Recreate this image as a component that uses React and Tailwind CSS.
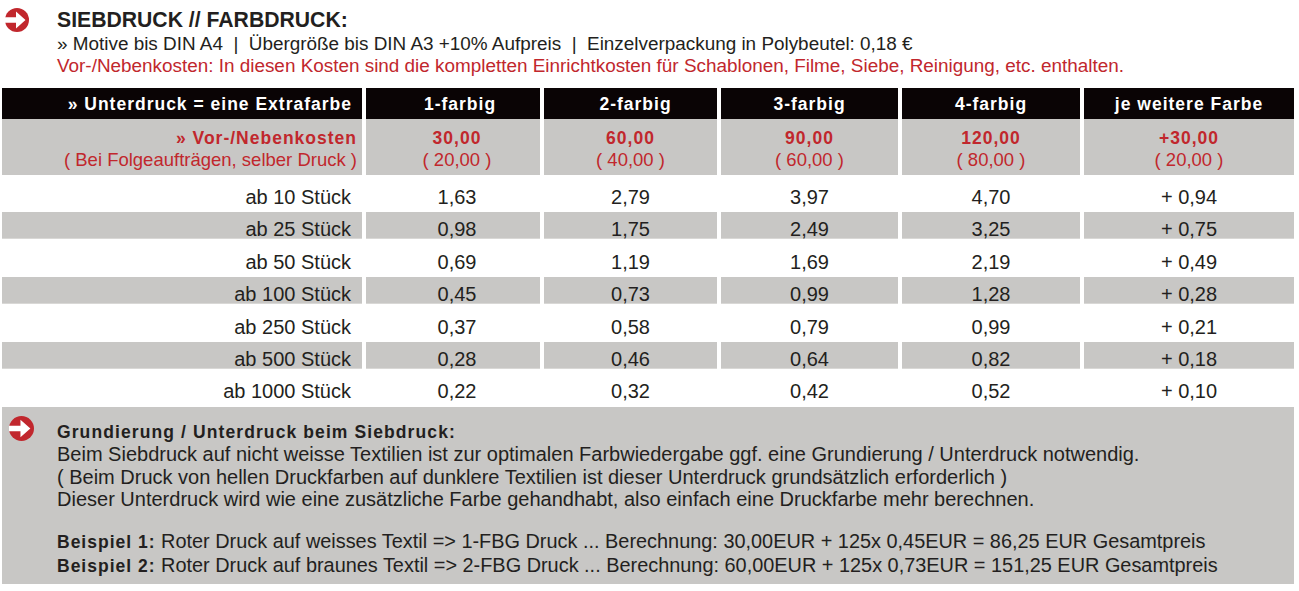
import React from "react";

const Arrow = ({ className }) => (
  <svg viewBox="0 0 24 24" className={className}>
    <circle cx="12" cy="12" r="12" fill="#c1272d" />
    <polygon points="-1,9.3 11,9.3 11,3.6 20.5,12 11,20.4 11,14.7 -1,14.7" fill="#ffffff" />
  </svg>
);

const cols = "grid grid-cols-[360px_174px_173px_177px_178px_210px] gap-x-[4px]";

const heads = ["1-farbig", "2-farbig", "3-farbig", "4-farbig", "je weitere Farbe"];
const setup = [
  ["30,00", "( 20,00 )"],
  ["60,00", "( 40,00 )"],
  ["90,00", "( 60,00 )"],
  ["120,00", "( 80,00 )"],
  ["+30,00", "( 20,00 )"],
];
const rows = [
  ["ab 10 Stück", "1,63", "2,79", "3,97", "4,70", "+ 0,94"],
  ["ab 25 Stück", "0,98", "1,75", "2,49", "3,25", "+ 0,75"],
  ["ab 50 Stück", "0,69", "1,19", "1,69", "2,19", "+ 0,49"],
  ["ab 100 Stück", "0,45", "0,73", "0,99", "1,28", "+ 0,28"],
  ["ab 250 Stück", "0,37", "0,58", "0,79", "0,99", "+ 0,21"],
  ["ab 500 Stück", "0,28", "0,46", "0,64", "0,82", "+ 0,18"],
  ["ab 1000 Stück", "0,22", "0,32", "0,42", "0,52", "+ 0,10"],
];

export default function App() {
  return (
    <div className="w-[1299px] h-[591px] bg-white overflow-hidden text-[#231f20] font-['Liberation_Sans',Arial,sans-serif]">
      {/* Top heading */}
      <div className="flex pt-[8px]">
        <div className="w-[57px] pl-[5px]">
          <Arrow className="w-[24px] h-[24px]" />
        </div>
        <div>
          <div className="text-[21.2px] leading-[24px] font-bold">SIEBDRUCK // FARBDRUCK:</div>
          <div className="text-[18.9px] leading-[23px] whitespace-pre">
            {"» Motive bis DIN A4  |  Übergröße bis DIN A3 +10% Aufpreis  |  Einzelverpackung in Polybeutel: 0,18 €"}
          </div>
          <div className="text-[18.9px] leading-[22px] text-[#c1272d]">
            Vor-/Nebenkosten: In diesen Kosten sind die kompletten Einrichtkosten für Schablonen, Filme, Siebe, Reinigung, etc. enthalten.
          </div>
        </div>
      </div>

      {/* Table */}
      <div className="ml-[2px] mt-[11px] w-[1292px]">
        <div className={cols}>
          <div className="h-[31px] bg-[#0a0405] text-white font-bold text-[17.5px] tracking-[1px] flex items-center justify-end pr-[10px] pt-[2px]">
            » Unterdruck = eine Extrafarbe
          </div>
          {heads.map((h, i) => (
            <div
              key={h}
              className={`h-[31px] bg-[#0a0405] text-white font-bold text-[17.5px] tracking-[1px] flex items-center justify-center pt-[2px] ${i === 0 ? "pl-[14px]" : i === 1 ? "pl-[10px]" : ""}`}
            >
              {h}
            </div>
          ))}
        </div>
        <div className={cols}>
          <div className="h-[56px] bg-[#c8c7c5] text-[#c1272d] flex flex-col justify-center items-end pr-[5px] pt-[3px]">
            <div className="font-bold text-[17.5px] tracking-[1px] leading-[22px]">» Vor-/Nebenkosten</div>
            <div className="text-[18.5px] leading-[22px]">( Bei Folgeaufträgen, selber Druck )</div>
          </div>
          {setup.map(([a, b], i) => (
            <div
              key={i}
              className={`h-[56px] bg-[#c8c7c5] text-[#c1272d] flex flex-col justify-center items-center pt-[3px] ${i === 0 ? "pl-[8px]" : ""}`}
            >
              <div className="font-bold text-[17.5px] tracking-[1px] leading-[22px]">{a}</div>
              <div className="text-[18.5px] leading-[22px]">{b}</div>
            </div>
          ))}
        </div>
        <div className="h-[5px]" />
        {rows.map((r, ri) => {
          const gray = ri % 2 === 1;
          return (
            <div key={ri} className={`${cols} h-[32.4px]`}>
              {r.map((c, ci) => (
                <div
                  key={ci}
                  className={`h-[27px] text-[20px] leading-[22px] pt-[6px] ${gray ? "bg-[#c8c7c5] border-b border-[#d9d8d6]" : ""} ${
                    ci === 0 ? "text-right pr-[11px]" : ci === 1 ? "text-center pl-[8px]" : "text-center"
                  }`}
                >
                  {c}
                </div>
              ))}
            </div>
          );
        })}

        {/* Bottom info box */}
        <div className="bg-[#c8c7c5] h-[177px] flex pt-[9px]">
          <div className="w-[55px] pl-[7px]">
            <Arrow className="w-[25px] h-[25px]" />
          </div>
          <div className="pt-[5px] text-[20px] leading-[22.5px]">
            <div className="font-bold text-[17.5px] tracking-[1.1px]">Grundierung / Unterdruck beim Siebdruck:</div>
            <div>Beim Siebdruck auf nicht weisse Textilien ist zur optimalen Farbwiedergabe ggf. eine Grundierung / Unterdruck notwendig.</div>
            <div>( Beim Druck von hellen Druckfarben auf dunklere Textilien ist dieser Unterdruck grundsätzlich erforderlich )</div>
            <div>Dieser Unterdruck wird wie eine zusätzliche Farbe gehandhabt, also einfach eine Druckfarbe mehr berechnen.</div>
            <div className="mt-[19px] leading-[23.5px] text-[19.9px]">
              <span className="font-bold tracking-[1px] text-[17.5px]">Beispiel 1:</span> Roter Druck auf weisses Textil =&gt; 1-FBG Druck ... Berechnung: 30,00EUR + 125x 0,45EUR = 86,25 EUR Gesamtpreis
            </div>
            <div className="leading-[23.5px] text-[19.9px]">
              <span className="font-bold tracking-[1px] text-[17.5px]">Beispiel 2:</span> Roter Druck auf braunes Textil =&gt; 2-FBG Druck ... Berechnung: 60,00EUR + 125x 0,73EUR = 151,25 EUR Gesamtpreis
            </div>
          </div>
        </div>
      </div>
    </div>
  );
}
